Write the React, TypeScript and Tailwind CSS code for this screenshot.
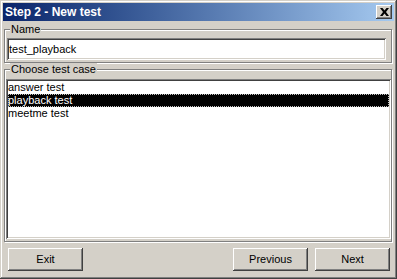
import React from "react";

const raised =
  "shadow-[inset_-1px_-1px_#404040,inset_1px_1px_#ffffff,inset_-2px_-2px_#808080,inset_2px_2px_#d4d0c8]";
const sunken =
  "shadow-[inset_1px_1px_#808080,inset_-1px_-1px_#ffffff,inset_2px_2px_#404040,inset_-2px_-2px_#d4d0c8]";

function Btn({ label, className }: { label: string; className?: string }) {
  return (
    <div
      className={`w-[75px] h-[23px] flex items-center justify-center bg-[#d4d0c8] text-black ${raised} ${className ?? ""}`}
    >
      {label}
    </div>
  );
}

export default function App() {
  return (
    <div
      className="w-[397px] h-[279px] bg-[#d4d0c8] p-[3px] flex flex-col text-[11px] leading-[13px] text-black shadow-[inset_-1px_-1px_#404040,inset_1px_1px_#d4d0c8,inset_-2px_-2px_#808080,inset_2px_2px_#ffffff]"
      style={{ fontFamily: '"Liberation Sans", Arial, sans-serif' }}
    >
      {/* Title bar */}
      <div className="h-[18px] flex items-center justify-between bg-linear-to-r from-[#0a246a] to-[#a6caf0] pl-[2px] pr-[2px]">
        <span className="text-white font-bold text-[12px]">Step 2 - New test</span>
        <div className={`w-[16px] h-[14px] bg-[#d4d0c8] flex items-center justify-center ${raised}`}>
          <svg width="9" height="8" viewBox="0 0 9 8" className="-mt-px">
            <path d="M0 0h2.5L4.5 2.5 6.5 0H9L6 4l3 4H6.5L4.5 5.5 2.5 8H0l3-4z" fill="#000" />
          </svg>
        </div>
      </div>

      {/* Name group */}
      <div className="relative mt-[8px] ml-[1px] mr-[2px] h-[34px] border border-[#808080] shadow-[inset_1px_1px_#ffffff,1px_1px_#ffffff]">
        <span className="absolute left-[5px] -top-[7px] px-[1px] bg-[#d4d0c8]">Name</span>
        <div className={`mt-[8px] ml-[2px] mr-[5px] h-[22px] bg-white flex items-center pl-[2px] ${sunken}`}>
          test_playback
        </div>
      </div>

      {/* Choose test case group */}
      <div className="relative mt-[6px] ml-[1px] mr-[2px] h-[173px] border border-[#808080] shadow-[inset_1px_1px_#ffffff,1px_1px_#ffffff] flex flex-col">
        <span className="absolute left-[5px] -top-[7px] px-[1px] bg-[#d4d0c8]">Choose test case</span>
        <div className={`mt-[9px] ml-[1px] mr-0 h-[160px] bg-white p-[2px] ${sunken}`}>
          <div className="h-[13px] flex items-center">answer test</div>
          <div className="h-[13px] flex items-center bg-black text-white outline-1 outline-dotted outline-[#c0c0c0] -outline-offset-1">
            playback test
          </div>
          <div className="h-[13px] flex items-center">meetme test</div>
        </div>
      </div>

      {/* Buttons */}
      <div className="mt-[6px] flex items-center pl-[5px] pr-[4px]">
        <Btn label="Exit" />
        <div className="flex-1" />
        <Btn label="Previous" />
        <Btn label="Next" className="ml-[7px]" />
      </div>
    </div>
  );
}
